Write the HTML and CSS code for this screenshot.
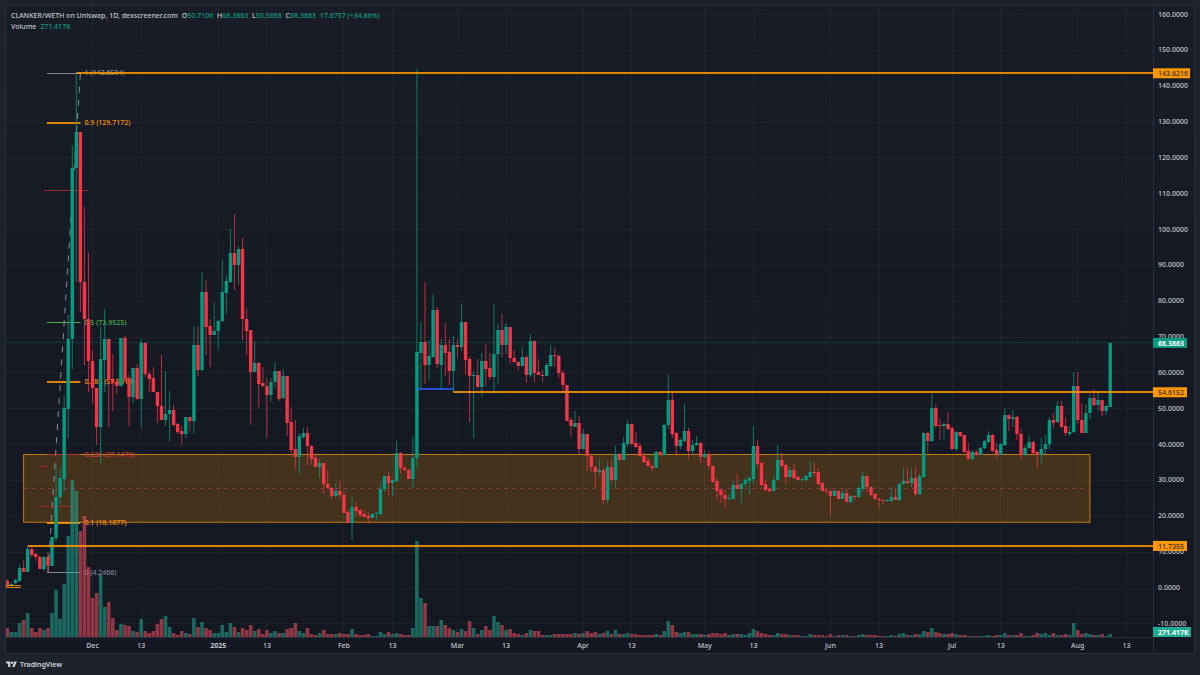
FILE: index.html
```
<!DOCTYPE html>
<html lang="en">
<head>
    <meta charset="UTF-8">
    <title>CLANKER/WETH</title>
    <link rel="stylesheet" href="styles.css">
</head>
<body>
<main class="panel">
    <svg id="chart" class="chart" role="img" aria-label="CLANKER/WETH daily candles"></svg>
    <div class="legend">
        <p>CLANKER/WETH on Uniswap, 1D, dexscreener.com
            <span class="pair">O<b>50.7106</b></span>
            <span class="pair">H<b>68.3863</b></span>
            <span class="pair">L<b>50.5656</b></span>
            <span class="pair">C<b>68.3863</b></span>
            <span class="pair"><b>17.6757 (+34.86%)</b></span>
        </p>
        <p>Volume <span class="pair"><b>271.417K</b></span></p>
    </div>
</main>
<footer class="footer">
    <svg class="logo" viewBox="0 0 36 28" aria-hidden="true">
        <path d="M14 22H7V11H0V4h14v18zM28 22h-8l7.5-18h8L28 22z"/>
        <circle cx="20" cy="8" r="4"/>
    </svg>
    <span>TradingView</span>
</footer>
<script src="chart.js"></script>
</body>
</html>
```

FILE: styles.css
```
* {
    box-sizing: border-box;
}

html, body {
    margin: 0;
    height: 100%;
}

body {
    display: flex;
    flex-direction: column;
    padding: 6px 6px 0;
    background: #1e222d;
    color: #c3c6ce;
    font-family: "Noto Sans", "Open Sans", sans-serif;
    font-size: 7px;
    font-weight: 500;
    overflow: hidden;
}

.panel {
    position: relative;
    flex: 1;
    min-height: 0;
    outline: 1px solid #2a2e39;
    background: linear-gradient(#181c27, #131722);
}

.chart {
    display: block;
    width: 100%;
    height: 100%;
}

.legend {
    position: absolute;
    left: 5px;
    top: 4px;
}

.legend p {
    margin: 0;
    line-height: 11px;
    white-space: nowrap;
}

.legend b {
    color: #0b9c86;
    font-weight: 500;
}

.pair {
    margin-left: 2px;
}

.footer {
    display: flex;
    align-items: center;
    gap: 3px;
    height: 22px;
    color: #d1d4dc;
    font-weight: 600;
}

.logo {
    width: 11px;
    height: 9px;
    fill: #d1d4dc;
}

/* chart parts */
.grid {
    stroke: #f0f3fa;
    stroke-opacity: 0.04;
}

.border {
    stroke: #2a2e39;
}

.axis {
    fill: #c3c6ce;
}

.mid {
    text-anchor: middle;
}

.strong {
    font-weight: bold;
}

.up {
    fill: #089981;
}

.down {
    fill: #f23645;
}

.wick {
    opacity: 0.75;
}

.vol {
    opacity: 0.55;
}

.vol.up {
    fill: #22ab94;
}

.vol.down {
    fill: #f7525f;
}

.level {
    stroke: #ff9800;
    stroke-width: 2;
    stroke-opacity: 0.85;
}

.gray {
    stroke: #868994;
}

.green {
    stroke: #4caf50;
}

.red {
    stroke: #b22833;
    stroke-opacity: 0.85;
}

.blue {
    stroke: #2962ff;
    stroke-width: 2;
    stroke-opacity: 0.75;
}

.trend {
    stroke: #8a8d98;
    stroke-dasharray: 6 7;
}

.zone {
    fill: #ff9800;
    fill-opacity: 0.2;
    stroke: #ff9800;
    stroke-opacity: 0.75;
}

.zone-mid {
    stroke: #9c3f63;
    stroke-opacity: 0.7;
    stroke-dasharray: 4 4;
}

.last {
    stroke: #089981;
    stroke-opacity: 0.45;
    stroke-dasharray: 1 1;
}

.t-gray {
    fill: #868994;
}

.t-orange {
    fill: #ff9800;
}

.t-green {
    fill: #4caf50;
}

.t-red {
    fill: #d03c3c;
}

.tag-orange {
    fill: #ff9800;
}

.tag-green {
    fill: #089981;
}

.tag-volume {
    fill: #22ab94;
}

.ink {
    fill: #3c2a0c;
}

.white {
    fill: #fff;
}
```

FILE: chart.js
```
// one row per day from 10 Nov: colour, high, body top, body bottom, low, volume
// levels count down from the top of the scale, 3.584 steps per 1.0 of price
var rows = (
    "r 579 581 586 586 9,g 583 584 586 586 5,g 579 580 583 584 5,g 565 568 581 582 14,r 560 568 572 572 17," +
    "g 546 549 572 572 24,r 547 549 555 557 9,r 553 554 557 561 5,r 556 557 569 569 9,g 556 557 569 571 7," +
    "r 552 557 566 573 9,g 537 537 566 566 24,g 463 497 538 541 47,g 469 478 497 505 18,g 396 408 479 492 53," +
    "g 315 339 409 438 101,g 146 168 339 369 157,g 73 132 168 282 146,r 132 132 282 312 106,r 207 282 319 365 121," +
    "r 253 319 361 392 70,r 350 361 388 403 39,r 388 388 427 445 44,g 327 359 427 463 62,g 309 339 360 392 30," +
    "r 339 339 380 427 35,r 354 380 383 411 19,r 378 382 386 394 7,g 338 338 386 386 13,r 336 338 379 382 12," +
    "r 375 378 397 426 11,g 368 368 397 403 6,r 364 368 399 400 5,g 339 343 399 428 18,r 343 343 374 377 6," +
    "r 371 374 379 392 4,r 367 378 392 392 6,r 392 392 406 423 13,r 355 406 420 420 18,g 371 414 420 426 21," +
    "g 391 410 414 442 10,r 405 410 425 426 4,r 423 424 432 434 2,r 426 431 434 445 6,g 417 417 434 438 4," +
    "r 417 417 421 431 3,g 326 345 421 434 19,r 327 345 370 376 10,g 272 292 370 371 15,r 280 292 327 355 9," +
    "r 319 326 335 367 7,g 303 331 335 335 4,g 320 321 331 349 4,g 260 292 321 322 12,g 275 281 293 314 5," +
    "g 229 253 282 283 14,r 214 253 265 290 10,g 246 249 265 285 5,r 238 249 319 340 9,r 308 319 331 355 7," +
    "r 330 330 372 425 12,g 341 363 372 372 6,r 362 363 384 407 8,r 367 383 386 387 3,r 378 386 395 438 7," +
    "g 378 382 395 402 4,g 362 371 382 388 6,r 371 371 399 401 4,g 369 376 398 399 4,r 376 376 423 436 8," +
    "r 407 422 450 453 9,r 420 449 457 469 14,g 433 436 457 474 6,g 428 433 437 439 4,r 427 433 446 465 9," +
    "r 445 446 459 465 3,r 455 458 467 467 2,g 459 463 467 478 4,r 463 463 484 494 7,r 471 484 488 489 3," +
    "r 487 488 496 499 3,g 483 491 496 498 3,r 482 491 495 499 4,r 492 495 513 513 3,r 509 512 523 523 3," +
    "g 497 507 523 540 8,r 502 507 511 517 3,r 509 510 515 517 2,r 510 514 517 517 2,r 512 516 518 523 3," +
    "g 513 514 518 518 1,g 512 513 514 520 1,g 483 489 514 515 5,g 476 476 489 492 3,r 472 476 483 495 5," +
    "g 479 480 483 496 3,g 441 453 481 482 4,r 452 453 468 474 3,r 465 468 470 471 2,r 469 470 479 479 2," +
    "g 437 458 479 488 9,g 69 352 458 468 96,g 322 342 353 388 39,r 282 342 365 384 34,g 340 356 365 380 11," +
    "g 294 310 357 358 11,r 307 310 364 368 11,g 339 345 365 389 17,r 323 345 353 376 12,r 339 352 371 385 9," +
    "g 336 345 371 392 7,r 339 345 347 358 5,g 304 322 347 351 8,r 322 322 360 374 6,r 357 359 376 422 16," +
    "g 371 375 376 438 9,r 359 375 387 388 3,g 353 361 387 397 7,r 344 361 369 386 11,r 353 368 377 380 7," +
    "g 304 354 377 394 21,g 324 330 354 384 15,r 314 330 345 357 12,g 323 327 345 354 7,r 327 327 358 364 8," +
    "r 350 358 362 363 4,r 361 362 366 371 3,g 347 357 366 366 2,r 355 357 375 383 4,g 334 341 375 377 7," +
    "r 341 341 373 382 6,r 359 372 375 375 6,r 370 375 376 382 2,g 363 365 376 376 2,g 345 355 366 367 2," +
    "r 348 355 356 367 3,r 354 356 373 378 3,r 370 373 385 391 3,r 385 385 421 421 3,r 417 420 426 437 3," +
    "g 411 423 427 427 4,r 416 423 449 454 3,g 429 434 449 450 4,r 434 434 456 471 6,r 454 456 467 473 4," +
    "r 466 467 472 488 5,g 459 470 472 476 3,r 468 470 500 505 4,g 461 467 500 503 6,r 459 467 480 483 3," +
    "g 446 454 480 488 7,r 453 454 460 461 3,g 437 443 460 460 3,g 420 424 444 447 4,r 423 424 444 445 3," +
    "r 432 443 447 448 3,r 443 446 456 457 2,r 452 456 462 463 2,r 458 461 466 466 2,r 465 466 468 471 2," +
    "g 451 452 468 468 3,r 451 452 455 456 2,g 424 425 455 456 6,g 374 400 425 429 16,r 392 400 434 438 12," +
    "r 432 433 446 454 5,g 438 440 446 449 4,g 404 431 441 442 5,r 428 431 451 459 5,g 440 445 451 454 3," +
    "g 436 443 445 446 3,r 442 443 457 463 3,g 450 454 457 458 2,r 451 454 466 470 3,r 466 466 482 483 4," +
    "r 478 481 491 500 4,r 489 490 495 503 3,r 490 495 499 508 4,g 494 498 499 500 2,g 481 485 499 499 3," +
    "r 474 485 489 489 3,g 483 484 489 503 3,g 478 480 484 487 2,g 476 478 481 494 4,g 426 446 479 484 8," +
    "r 440 446 464 467 6,r 462 463 485 486 4,r 479 484 490 491 3,r 488 489 491 493 2,g 476 480 491 492 2," +
    "g 445 460 480 481 4,r 453 460 466 467 3,r 464 465 477 484 3,g 467 470 477 478 2,r 463 470 478 479 2," +
    "r 476 477 480 480 2,g 478 479 480 482 1,g 475 476 480 482 1,g 461 472 477 478 3,r 463 472 473 476 2," +
    "r 468 472 484 485 2,r 482 483 491 491 2,r 489 490 491 494 1,r 491 491 496 515 3,g 490 491 496 496 1," +
    "r 490 491 499 499 2,g 490 493 499 499 2,r 489 493 502 502 2,g 495 496 502 503 1,r 495 496 497 500 1," +
    "g 485 488 497 498 2,g 472 476 489 492 3,r 475 476 487 493 2,r 486 487 495 496 2,r 493 494 499 500 2," +
    "r 498 499 500 508 1,r 499 500 501 504 1,g 499 500 501 502 1,g 488 497 501 502 2,r 487 497 500 500 1," +
    "g 483 484 500 501 3,g 468 481 484 485 4,r 468 481 483 484 2,g 468 478 483 487 2,r 467 478 494 497 3," +
    "g 474 476 494 495 3,g 432 433 477 478 6,r 432 433 441 453 5,g 394 408 441 442 9,r 404 408 426 428 5," +
    "r 419 425 426 440 4,g 422 424 426 439 3,r 412 424 429 430 3,r 427 428 449 450 4,g 431 432 449 451 3," +
    "r 432 432 436 437 2,r 435 435 452 453 2,r 443 451 459 460 1,g 450 452 459 460 1,r 450 452 455 456 1," +
    "g 447 448 455 455 1,g 440 441 448 449 1,g 431 435 442 443 2,r 434 435 451 452 1,r 443 450 455 459 2," +
    "g 443 444 455 455 2,g 408 415 445 446 4,r 415 415 419 431 2,g 410 417 419 427 2,r 416 417 434 440 2," +
    "r 429 434 455 460 4,g 445 448 455 457 1,g 435 442 448 449 1,r 441 442 453 455 2,r 451 452 455 469 4," +
    "g 438 449 455 463 3,g 435 444 449 454 4,g 417 420 444 449 2,r 413 420 423 427 4,g 401 406 422 423 2," +
    "r 401 406 427 428 2,r 418 426 433 436 3,g 426 432 434 436 2,g 372 386 432 433 14,r 372 386 420 423 7," +
    "r 403 420 433 433 3,g 404 413 433 433 4,g 394 398 413 419 3,r 389 398 405 407 2,g 393 400 405 411 2," +
    "r 400 400 411 416 3,g 405 406 411 415 1,g 343 343 407 407 3"
).split(",");

var ticks = [
    [21, "Dec"], [33, "13"], [52, "2025"], [64, "13"], [83, "Feb"], [95, "13"],
    [111, "Mar"], [123, "13"], [142, "Apr"], [154, "13"], [172, "May"], [184, "13"],
    [203, "Jun"], [215, "13"], [233, "Jul"], [245, "13"], [264, "Aug"], [276, "13"]
];

// ratio, price, line class, text class
var fibs = [
    ["1", "143.6584", "gray", "t-gray"],
    ["0.9", "129.7172", "level", "t-orange"],
    ["0.5", "73.9525", "green", "t-green"],
    ["0.382", "57.5019", "level", "t-orange"],
    ["0.236", "37.1478", "red", "t-red"],
    ["0.1", "18.1877", "level", "t-orange"],
    ["0", "4.2466", "gray", "t-gray"]
];

var svg = document.getElementById("chart");

function draw() {
    var w = svg.clientWidth;
    var h = svg.clientHeight;
    var right = w - 41;
    var floor = h - 16;
    var step = right / 282.9;
    var ky = floor / 631;
    var out = [];

    function x(day) {
        return 1.4 + day * step;
    }

    function y(level) {
        return (level - 6) * ky;
    }

    function p(price) {
        return y(588 - price * 3.584);
    }

    function add(s) {
        out.push(s);
    }

    function line(cls, x1, y1, x2, y2) {
        add('<line class="' + cls + '" x1="' + x1 + '" y1="' + y1 + '" x2="' + x2 + '" y2="' + y2 + '"/>');
    }

    function rect(cls, left, top, width, height) {
        add('<rect class="' + cls + '" x="' + left + '" y="' + top + '" width="' + width + '" height="' + height + '"/>');
    }

    function text(cls, tx, ty, s) {
        add('<text class="' + cls + '" x="' + tx + '" y="' + ty + '">' + s + '</text>');
    }

    function snap(v) {
        return Math.floor(v) + 0.5;
    }

    function tag(cls, ink, top, width, s) {
        rect(cls, right, top - 5, width, 10);
        text(ink, right + 5, Math.round(top) + 3, s);
    }

    // grid
    for (var v = -10; v <= 160; v += 10) {
        line("grid", 0, snap(p(v)), right, snap(p(v)));
        text("axis", right + 5, Math.round(p(v)) + 2, v.toFixed(4));
    }
    ticks.forEach(function (t) {
        line("grid", snap(x(t[0])), 0, snap(x(t[0])), floor);
        text(t[1] === "2025" ? "axis mid strong" : "axis mid", x(t[0]), floor + 11, t[1]);
    });
    line("border", right + 0.5, 0, right + 0.5, h);
    line("border", 0, floor + 0.5, right, floor + 0.5);

    // accumulation zone
    rect("zone", x(4), snap(p(37.2)), x(267) - x(4), p(18.3) - p(37.2));
    line("zone-mid", x(4), snap(p(27.7)), x(267), snap(p(27.7)));

    // fib retracement
    line("trend", x(10), p(4.2466), x(18), p(143.6584));
    fibs.forEach(function (f) {
        var fy = f[2] === "level" ? Math.round(p(f[1])) : snap(p(f[1]));
        line(f[2], x(10) - 1, fy, x(18), fy);
        text(f[3], x(19), Math.round(p(f[1])) + 2, f[0] + " (" + f[1] + ")");
    });
    line("red", x(9), snap(p(111)), x(20), snap(p(111)));
    line("red", x(8), snap(p(33.9)), x(10), snap(p(33.9)));
    line("red", x(8), snap(p(22.7)), x(16), snap(p(22.7)));

    var data = rows.map(function (r) {
        var a = r.split(" ");
        return {cls: a[0] === "g" ? "up" : "down", hi: +a[1], top: +a[2], bottom: +a[3], lo: +a[4], vol: +a[5]};
    });

    data.forEach(function (d, i) {
        rect("vol " + d.cls, x(i) - 1.8, floor - d.vol * ky, 3.6, d.vol * ky);
    });
    data.forEach(function (d, i) {
        rect("wick " + d.cls, x(i) - 0.5, y(d.hi), 1, (d.lo - d.hi) * ky);
        rect(d.cls, x(i) - 1.7, y(d.top), 3.4, (d.bottom - d.top) * ky);
    });

    // horizontal levels
    line("level", x(17), Math.round(p(143.6216)), right, Math.round(p(143.6216)));
    line("level", x(110), Math.round(p(54.6152)), right, Math.round(p(54.6152)));
    line("level", x(5), Math.round(p(11.7355)), right, Math.round(p(11.7355)));
    rect("zone", 0.5, snap(p(0.7)), x(3), 2);
    line("blue", x(101), Math.round(p(55.6)), x(110), Math.round(p(55.6)));
    line("last", 0, snap(p(68.3863)), right, snap(p(68.3863)));

    tag("tag-orange", "ink", p(143.6216), 37, "143.6216");
    tag("tag-orange", "ink", p(54.6152), 34, "54.6152");
    tag("tag-orange", "ink", p(11.7355), 34, "11.7355");
    tag("tag-green", "white strong", p(68.3863), 34, "68.3863");
    tag("tag-volume", "white strong", floor - 5, 38, "271.417K");

    svg.innerHTML = out.join("");
}

draw();
window.addEventListener("resize", draw);
```
